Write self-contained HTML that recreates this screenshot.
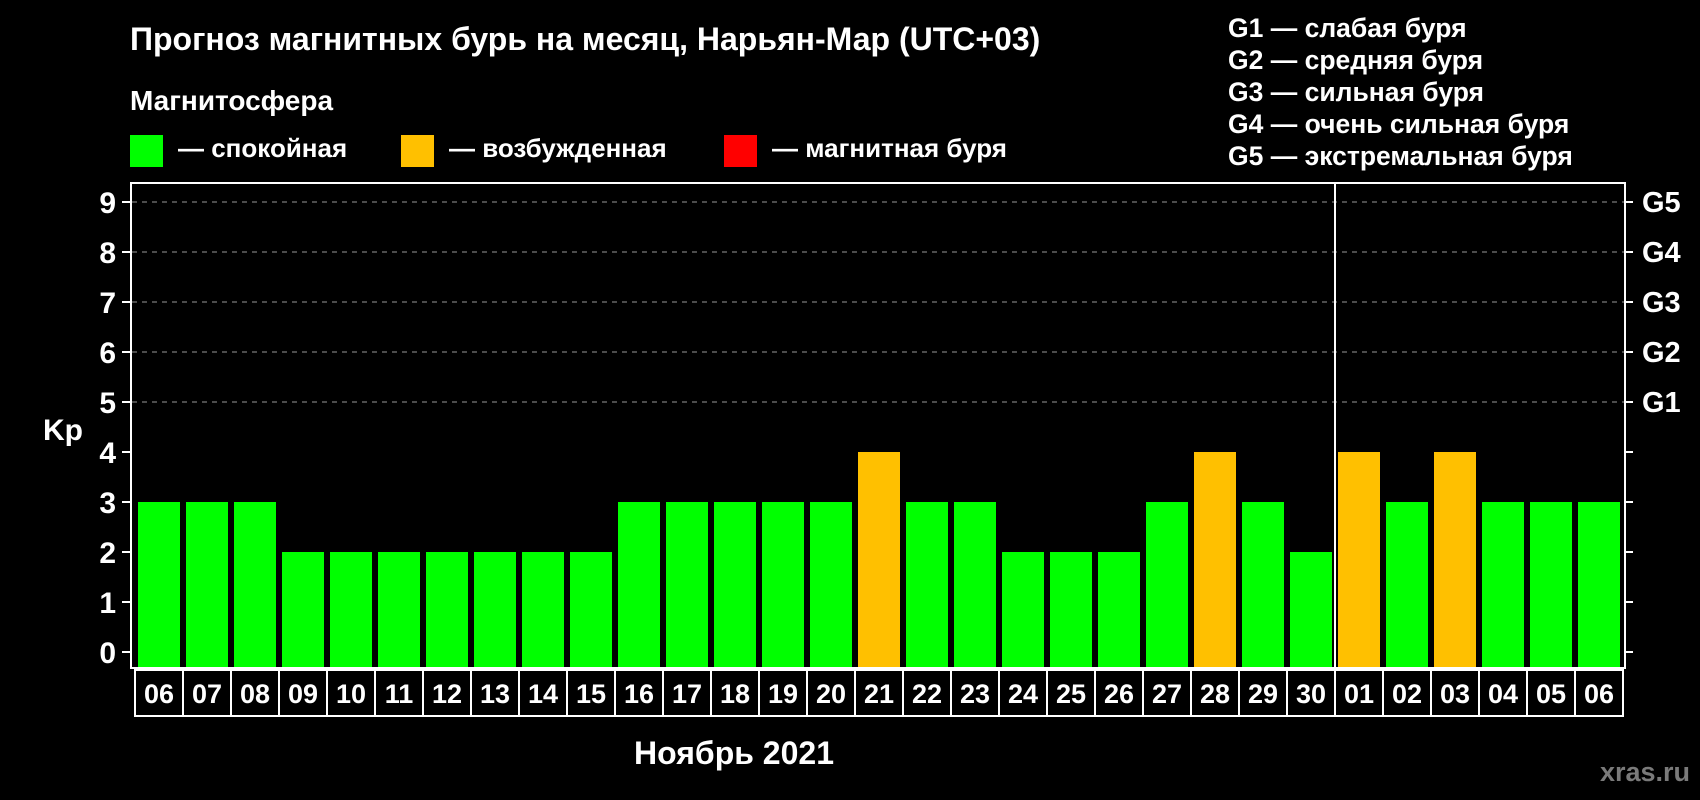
<!DOCTYPE html>
<html><head><meta charset="utf-8"><style>
html,body{margin:0;padding:0;background:#000;}
svg{display:block}
text{font-family:"Liberation Sans",Arial,sans-serif;font-weight:bold;fill:#fff}
</style></head><body>
<svg width="1700" height="800" viewBox="0 0 1700 800" xmlns="http://www.w3.org/2000/svg">
<rect width="1700" height="800" fill="#000"/>
<text x="130" y="50" font-size="32">Прогноз магнитных бурь на месяц, Нарьян-Мар (UTC+03)</text>
<text x="130" y="110" font-size="28">Магнитосфера</text>
<rect x="130" y="135" width="33" height="32" fill="#00ff00"/>
<text x="178" y="157" font-size="26">— спокойная</text>
<rect x="401" y="135" width="33" height="32" fill="#ffc000"/>
<text x="449" y="157" font-size="26">— возбужденная</text>
<rect x="724" y="135" width="33" height="32" fill="#ff0000"/>
<text x="772" y="157" font-size="26">— магнитная буря</text>
<g font-size="26.5">
<text x="1228" y="37">G1 — слабая буря</text>
<text x="1228" y="69">G2 — средняя буря</text>
<text x="1228" y="101">G3 — сильная буря</text>
<text x="1228" y="133">G4 — очень сильная буря</text>
<text x="1228" y="165">G5 — экстремальная буря</text>
</g>
<g stroke="#999" stroke-width="1" stroke-dasharray="5,5">
<line x1="132" y1="202" x2="1624" y2="202"/>
<line x1="132" y1="252" x2="1624" y2="252"/>
<line x1="132" y1="302" x2="1624" y2="302"/>
<line x1="132" y1="352" x2="1624" y2="352"/>
<line x1="132" y1="402" x2="1624" y2="402"/>
</g>
<g id="bars"></g>
<g stroke="#fff" stroke-width="2" fill="none">
<rect x="131" y="183" width="1494" height="485"/>
<line x1="1335" y1="183" x2="1335" y2="668"/>
</g>
<g id="ticks" stroke="#fff" stroke-width="2"></g>
<g font-size="30" text-anchor="end" id="ylab"></g>
<text x="43" y="440" font-size="30">Kp</text>
<g font-size="29">
<text x="1642" y="212">G5</text>
<text x="1642" y="262">G4</text>
<text x="1642" y="312">G3</text>
<text x="1642" y="362">G2</text>
<text x="1642" y="412">G1</text>
</g>
<g id="dates" font-size="27" text-anchor="middle"></g>
<text x="734" y="764" font-size="32" text-anchor="middle">Ноябрь 2021</text>
<text x="1690" y="781" font-size="27" text-anchor="end" style="fill:#7a7a7a">xras.ru</text>
<script>
(function(){
var v=[3,3,3,2,2,2,2,2,2,2,3,3,3,3,3,4,3,3,2,2,2,3,4,3,2,4,3,4,3,3,3];
var d=["06","07","08","09","10","11","12","13","14","15","16","17","18","19","20","21","22","23","24","25","26","27","28","29","30","01","02","03","04","05","06"];
var ns="http://www.w3.org/2000/svg";
function el(t,a,p,txt){var e=document.createElementNS(ns,t);for(var k in a)e.setAttribute(k,a[k]);if(txt)e.textContent=txt;document.getElementById(p).appendChild(e);}
for(var i=0;i<31;i++){var x=138+i*48,bt=652-v[i]*50;
el("rect",{x:x,y:bt,width:42,height:668-bt,fill:v[i]>=4?"#ffc000":"#00ff00"},"bars");
el("rect",{x:135+i*48,y:670,width:48,height:46,fill:"none",stroke:"#fff","stroke-width":2},"bars");
el("text",{x:159+i*48,y:703},"dates",d[i]);}
for(var k=0;k<=9;k++){var y=652-k*50;
el("line",{x1:122,y1:y,x2:131,y2:y},"ticks");
el("line",{x1:1625,y1:y,x2:1633,y2:y},"ticks");
el("text",{x:116,y:y+11},"ylab",""+k);}
})();
</script>
</svg>
</body></html>
